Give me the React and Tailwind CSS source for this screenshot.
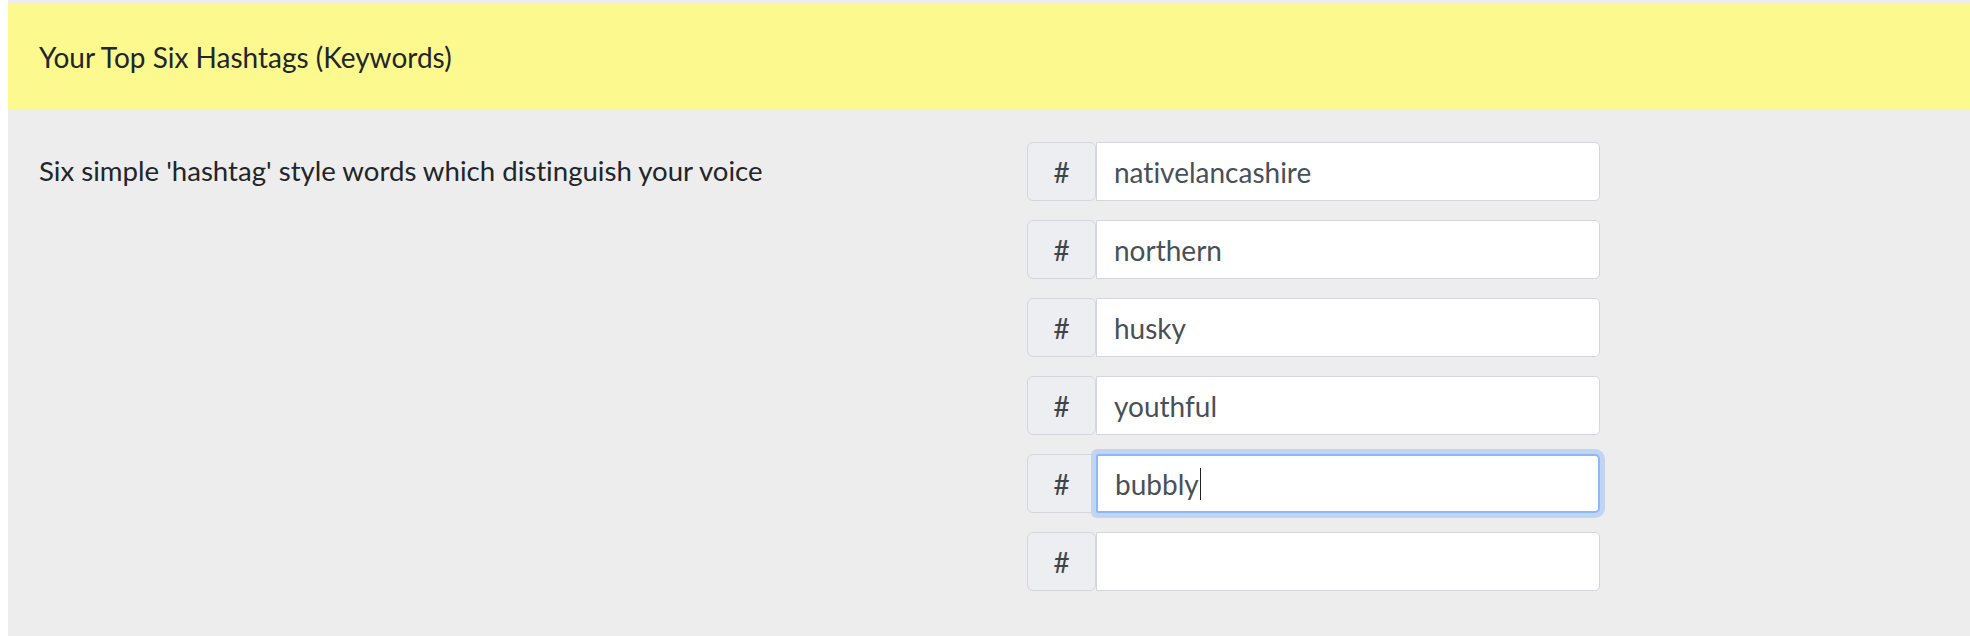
import React from "react";

const tags = ["nativelancashire", "northern", "husky", "youthful", "bubbly", ""];

export default function App() {
  return (
    <div className="w-[1970px] h-[636px] bg-white pl-[8px] overflow-hidden [font-variant-ligatures:none]" style={{ fontFamily: "Lato, 'Noto Sans', sans-serif" }}>
      <div className="h-full bg-[#ededed] pt-[4px]">
        <div className="h-[105px] bg-[#fcf98e] flex items-center pl-[31px] text-[28px] text-[#222529]">
          Your Top Six Hashtags (Keywords)
        </div>
        <div className="flex pt-[33px]">
          <div className="w-[1019px] pl-[31px] pt-[12px] text-[27.6px] leading-[34px] text-[#222529]">
            Six simple 'hashtag' style words which distinguish your voice
          </div>
          <div className="flex flex-col gap-[19px]">
            {tags.map((t, i) => {
              const focused = i === 4;
              return (
                <div key={i} className="flex h-[59px]">
                  <div className="w-[69px] h-full flex items-center justify-center bg-[#eceef1] border-[1.5px] border-[#d3d7dc] rounded-[6px] text-[28px] text-[#3f444a]">
                    #
                  </div>
                  <div
                    className={
                      "w-[504px] h-full bg-white rounded-r-[5px] flex items-center pl-[17px] text-[28px] text-[#495057] " +
                      (focused
                        ? "border-2 border-[#8db8f7] shadow-[0_0_0_5px_#c1d4f2] rounded-l-[2px]"
                        : "border-[1.5px] border-[#d3d7dc]")
                    }
                  >
                    {t}
                    {focused && <span className="inline-block w-[1.5px] h-[32px] bg-[#222] ml-[1px]"></span>}
                  </div>
                </div>
              );
            })}
          </div>
        </div>
      </div>
    </div>
  );
}
